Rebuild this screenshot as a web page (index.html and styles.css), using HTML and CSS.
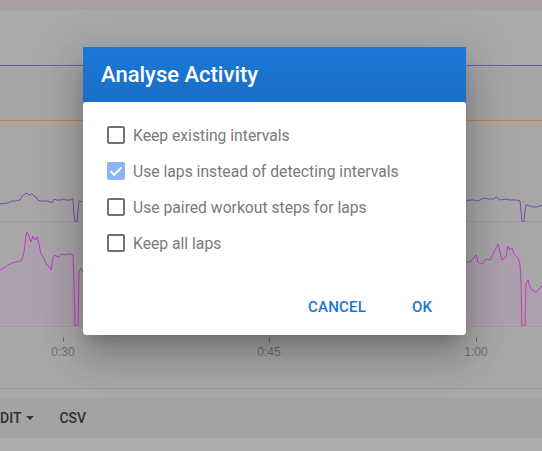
FILE: index.html
```html
<!DOCTYPE html>
<html>
<head>
<meta charset="utf-8">
<link rel="stylesheet" href="styles.css">
</head>
<body>
<div class="page">
  <div class="strip"></div>
  <div class="band band-a"></div>
  <div class="hline purple"></div>
  <div class="band band-b"></div>
  <div class="hline orange"></div>
  <div class="chart chart-1">
    <svg width="542" height="101" viewBox="0 0 542 101">
      <polyline fill="none" stroke="#6a54ae" stroke-width="1" points="0,83 8,82 12,80 16,80 20,79 22,75 25,73 27,72 29,74 32,73 34,75 36,76 38,79 41,80 44,80 47,80 50,81 52,82 54,78 57,79 60,79 64,78 66,79 70,79 72,78 73,78 74,95 75,101 77,101 78,90 79,80 82,81"/>
      <polyline fill="none" stroke="#6a54ae" stroke-width="1" points="466,80 470,79 474,79 478,80 484,77 488,78 494,78 496,76 498,77 500,79 506,78 510,79 516,79 520,80 521,90 522,101 524,101 525,90 526,84 528,84 530,85 533,86 537,86 540,85 542,84"/>
    </svg>
  </div>
  <div class="chart chart-2">
    <svg width="542" height="104" viewBox="0 0 542 104">
      <polygon fill="#b39ab6" fill-opacity="0.45" points="0,48 4,46 8,43 12,41 16,40 20,39 22,38 24,30 26,14 27,10 29,14 31,20 33,14 35,18 37,15 39,22 41,32 44,36 46,42 49,44 51,48 53,36 55,33 58,35 62,32 65,33 68,32 71,32 73,33 74,60 75,104 78,104 79,50 81,46 83,50 83,104 0,104"/>
      <polyline fill="none" stroke="#c13cc2" stroke-width="1" points="0,48 4,46 8,43 12,41 16,40 20,39 22,38 24,30 26,14 27,10 29,14 31,20 33,14 35,18 37,15 39,22 41,32 44,36 46,42 49,44 51,48 53,36 55,33 58,35 62,32 65,33 68,32 71,32 73,33 74,60 75,104 78,104 79,50 81,46 83,50"/>
      <polygon fill="#b39ab6" fill-opacity="0.45" points="466,40 470,40 474,35 476,33 478,40 482,42 486,37 490,38 494,30 496,26 498,22 500,30 502,38 506,35 508,24 510,28 512,26 514,32 518,36 520,42 521,60 522,104 525,104 526,62 528,58 530,65 532,68 536,70 540,66 542,64 542,104 466,104"/>
      <polyline fill="none" stroke="#c13cc2" stroke-width="1" points="466,40 470,40 474,35 476,33 478,40 482,42 486,37 490,38 494,30 496,26 498,22 500,30 502,38 506,35 508,24 510,28 512,26 514,32 518,36 520,42 521,60 522,104 525,104 526,62 528,58 530,65 532,68 536,70 540,66 542,64"/>
    </svg>
  </div>
  <div class="axis">
    <div class="tick t30"><span class="mark"></span><span class="lbl">0:30</span></div>
    <div class="tick t45"><span class="mark"></span><span class="lbl">0:45</span></div>
    <div class="tick t100"><span class="mark"></span><span class="lbl">1:00</span></div>
  </div>
  <div class="hline grey"></div>
  <div class="gap"></div>
  <div class="toolbar">
    <span class="tool edit">DIT <span class="caret"></span></span>
    <span class="tool">CSV</span>
  </div>
  <div class="bottom"></div>

  <div class="dialog">
    <div class="dialog-title">Analyse Activity</div>
    <div class="dialog-card">
      <div class="options">
        <label class="opt"><span class="box"></span><span class="txt">Keep existing intervals</span></label>
        <label class="opt"><span class="box checked"><svg width="18" height="18" viewBox="0 0 18 18"><path d="M3.5 9.2 L7.2 12.8 L14.6 5.4" fill="none" stroke="#ffffff" stroke-width="2"/></svg></span><span class="txt">Use laps instead of detecting intervals</span></label>
        <label class="opt"><span class="box"></span><span class="txt">Use paired workout steps for laps</span></label>
        <label class="opt"><span class="box"></span><span class="txt">Keep all laps</span></label>
      </div>
      <div class="actions">
        <button class="btn">CANCEL</button>
        <button class="btn">OK</button>
      </div>
    </div>
  </div>
</div>
</body>
</html>
```
FILE: styles.css
```css
html, body {
  margin: 0;
  padding: 0;
}
body {
  width: 542px;
  height: 451px;
  overflow: hidden;
  background: #a9a9a9;
  font-family: Roboto, "Liberation Sans", Arial, sans-serif;
}
.page {
  position: relative;
  width: 542px;
  height: 451px;
  overflow: hidden;
}
.strip { height: 10px; background: #a89fa3; }
.band-a { height: 55px; background: #a9a9a9; }
.band-b { height: 54px; background: #a6a5a8; }
.hline { height: 1px; }
.hline.purple { background: #6d5cab; }
.hline.orange { background: #cc8440; }
.hline.grey { background: #9c9c9c; }
.chart svg { display: block; }
.chart-1 {
  height: 101px;
  background: #a9a6a6;
  border-bottom: 1px solid #9e9c9d;
  box-sizing: border-box;
}
.chart-2 {
  height: 105px;
  background: #a8a6a8;
  border-bottom: 1px solid #9e9c9d;
  box-sizing: border-box;
}
.axis {
  height: 61px;
  background: #a8a8a8;
  display: flex;
}
.tick {
  display: flex;
  flex-direction: column;
  align-items: center;
  width: 40px;
  padding-top: 10px;
}
.t30 { margin-left: 43px; }
.t45 { margin-left: 166px; }
.t100 { margin-left: 167px; }
.mark {
  width: 1px;
  height: 5px;
  background: #707070;
}
.lbl {
  margin-top: 3px;
  font-family: "Liberation Sans", Arial, sans-serif;
  font-size: 12px;
  color: #727272;
  line-height: 14px;
}
.gap { height: 9px; background: #a9a9a9; }
.toolbar {
  height: 40px;
  background: #a3a3a3;
  display: flex;
  align-items: center;
  gap: 25px;
  padding-left: 0;
}
.tool {
  font-size: 14px;
  font-weight: 500;
  color: #2f2f2f;
  display: flex;
  align-items: center;
}
.caret {
  display: inline-block;
  width: 0;
  height: 0;
  border-left: 4px solid transparent;
  border-right: 4px solid transparent;
  border-top: 4px solid #333;
  margin-left: 5px;
}
.bottom { height: 14px; background: #ababab; }

.dialog {
  position: absolute;
  left: 83px;
  top: 47px;
  width: 383px;
  box-shadow: 0 11px 15px -7px rgba(0,0,0,.2), 0 24px 38px 3px rgba(0,0,0,.14), 0 9px 46px 8px rgba(0,0,0,.12);
  border-radius: 4px;
}
.dialog-title {
  height: 55px;
  background: linear-gradient(#1a78d5, #1a6fc7);
  color: #fff;
  font-size: 22px;
  font-weight: 500;
  padding-left: 18px;
  display: flex;
  align-items: center;
  box-sizing: border-box;
  padding-top: 0;
}
.dialog-card {
  background: #fff;
  border-radius: 4px;
  height: 233px;
  display: flex;
  flex-direction: column;
  box-sizing: border-box;
  padding: 22px 0 0 24px;
}
.options {
  display: flex;
  flex-direction: column;
  gap: 14px;
}
.opt {
  display: flex;
  align-items: center;
  height: 22px;
  gap: 8px;
}
.box {
  width: 18px;
  height: 18px;
  box-sizing: border-box;
  border: 2px solid #737373;
  border-radius: 2px;
  flex: none;
}
.box.checked {
  border: none;
  background: #8ab4f8;
}
.box svg { display: block; }
.txt {
  font-size: 15.7px;
  color: #7a7a7a;
}
.actions {
  margin-top: auto;
  display: flex;
  justify-content: flex-end;
  gap: 8px;
  padding: 0 12px 10px 0;
}
.btn {
  background: none;
  border: none;
  font-family: inherit;
  font-size: 15px;
  font-weight: 500;
  color: #1976d2;
  min-width: 64px;
  height: 36px;
  padding: 0 16px;
  letter-spacing: 0.2px;
}
```
